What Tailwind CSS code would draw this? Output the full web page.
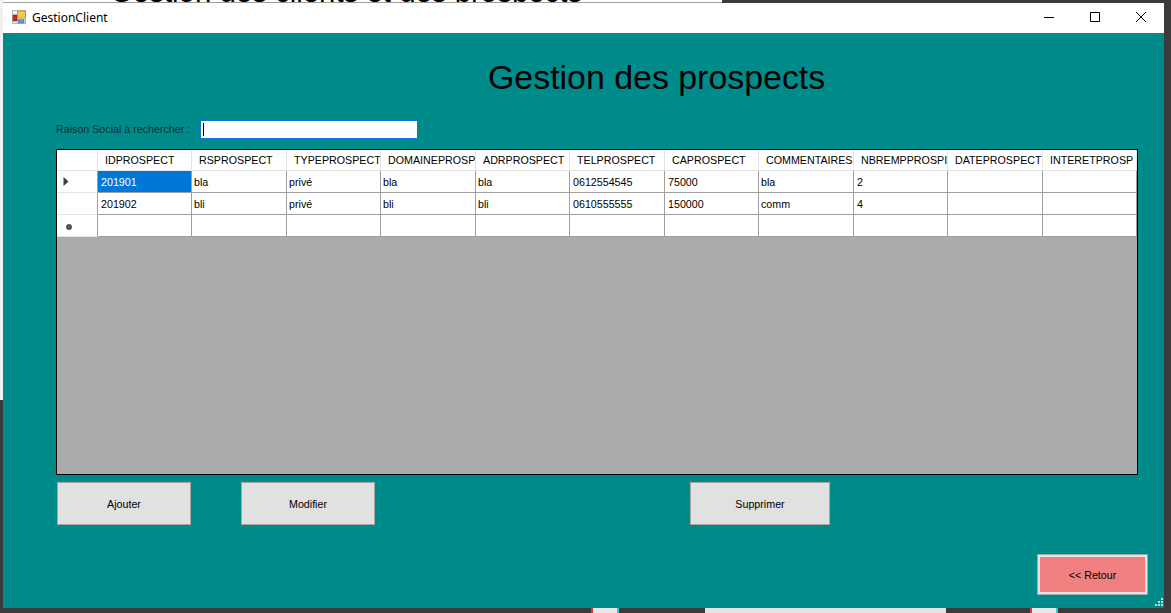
<!DOCTYPE html>
<html><head><meta charset="utf-8"><script src="https://cdn.jsdelivr.net/npm/@tailwindcss/browser@4"></script></head>
<body class="relative w-[1171px] h-[613px] overflow-hidden bg-[#3b3b3b] font-['Liberation_Sans',sans-serif]">
<!-- desktop behind the window -->
<div class="absolute left-0 top-0 w-[722px] h-[3px] bg-white border-b border-[#a0a0a0] overflow-hidden"><div class="absolute left-[110px] top-[-26px] text-[29.4px] leading-[36px] text-black whitespace-nowrap">Gestion des clients et des prospects</div></div>
<div class="absolute left-0 top-0 w-[3px] h-[400px] bg-[#f2f2f2]"></div>
<div class="absolute left-[591px] top-[608px] w-[28px] h-[5px] bg-[#e8e8e8] border-l-2 border-l-[#c84040] border-r-2 border-r-[#40c8c8]"></div>
<div class="absolute left-[705px] top-[608px] w-[241px] h-[5px] bg-[#e4e4e4]"></div>
<div class="absolute left-[1030px] top-[608px] w-[28px] h-[5px] bg-[#e8e8e8] border-l-2 border-l-[#c84040] border-r-2 border-r-[#40c8c8]"></div>

<div class="relative ml-[3px] w-[1161px] pt-[3px]">
  <!-- title bar -->
  <div class="flex items-center h-[30px] bg-white">
    <svg class="ml-[9px] w-[16px] h-[16px]" viewBox="0 0 16 16"><rect x="0.5" y="0.5" width="13" height="13" fill="#f4f4f4" stroke="#b9b9b9"/><rect x="1" y="5" width="4" height="6" fill="#c62828" stroke="#7a1c1c" stroke-width="0.6"/><rect x="5.5" y="1" width="8" height="7" fill="#f7c948" stroke="#b98a1a" stroke-width="0.8"/><rect x="6" y="9.5" width="6" height="3.5" fill="#6a9bd8" stroke="#3f6fb0" stroke-width="0.6"/></svg>
    <span class="ml-[4px] text-[12px] text-black font-['Noto_Sans',sans-serif]">GestionClient</span>
    <div class="ml-auto flex items-center">
      <svg class="w-[46px] h-[30px]" viewBox="0 0 46 30"><path d="M18 14.5H28" stroke="#000" fill="none"/></svg>
      <svg class="w-[46px] h-[30px]" viewBox="0 0 46 30"><path d="M18.5 9.5H27.5V18.5H18.5Z" stroke="#000" fill="none"/></svg>
      <svg class="w-[46px] h-[30px]" viewBox="0 0 46 30"><path d="M18 9L28 19M28 9L18 19" stroke="#000" fill="none" stroke-width="1"/></svg>
    </div>
  </div>
  <!-- client area -->
  <div class="relative h-[575px] bg-[#008b8b] pl-[53px] text-[10.7px] text-black">
    <h1 class="pl-[432px] pt-[25px] h-[87px] text-[33.9px] leading-[38px] font-normal text-black">Gestion des prospects</h1>
    <div class="flex items-center h-[19px]">
      <label class="w-[144px] text-[#10302f]">Raison Social à rechercher :</label>
      <div class="w-[218px] h-[19px] bg-white border border-[#0a78e0] flex items-center pl-[2px]"><div class="w-px h-[13px] bg-black"></div></div>
    </div>
    <!-- data grid -->
    <div class="mt-[10px] w-[1082px] h-[326px] border border-black bg-[#ababab]">
      <div class="grid grid-cols-[41px_94px_95px_94px_95px_94px_95px_94px_95px_94px_95px_94px] grid-rows-[21px_22px_22px_22px] bg-white leading-[21px] whitespace-nowrap">
        <div class="border-r border-b border-[#e4e4e4]"></div>
        <div class="pl-[7px] overflow-hidden border-r border-b border-[#e4e4e4]">IDPROSPECT</div>
        <div class="pl-[7px] overflow-hidden border-r border-b border-[#e4e4e4]">RSPROSPECT</div>
        <div class="pl-[7px] overflow-hidden border-r border-b border-[#e4e4e4]">TYPEPROSPECT</div>
        <div class="pl-[7px] overflow-hidden border-r border-b border-[#e4e4e4]">DOMAINEPROSP</div>
        <div class="pl-[7px] overflow-hidden border-r border-b border-[#e4e4e4]">ADRPROSPECT</div>
        <div class="pl-[7px] overflow-hidden border-r border-b border-[#e4e4e4]">TELPROSPECT</div>
        <div class="pl-[7px] overflow-hidden border-r border-b border-[#e4e4e4]">CAPROSPECT</div>
        <div class="pl-[7px] overflow-hidden border-r border-b border-[#e4e4e4]">COMMENTAIRES</div>
        <div class="pl-[7px] overflow-hidden border-r border-b border-[#e4e4e4]">NBREMPPROSPI</div>
        <div class="pl-[7px] overflow-hidden border-r border-b border-[#e4e4e4]">DATEPROSPECT</div>
        <div class="pl-[7px] overflow-hidden border-r border-b border-[#e4e4e4]">INTERETPROSP</div>

        <div class="flex items-center pl-[6px] border-r border-r-[#a0a0a0] border-b border-b-[#e4e4e4]"><svg class="w-[6px] h-[9px]" viewBox="0 0 6 9"><path d="M0.5 0V9L5.5 4.5Z" fill="#3c3c3c"/></svg></div>
        <div class="pl-[3px] pt-px bg-[#0078d7] text-white border-r border-b border-[#a0a0a0]">201901</div>
        <div class="pl-[2px] pt-px border-r border-b border-[#a0a0a0]">bla</div>
        <div class="pl-[2px] pt-px border-r border-b border-[#a0a0a0]">privé</div>
        <div class="pl-[2px] pt-px border-r border-b border-[#a0a0a0]">bla</div>
        <div class="pl-[2px] pt-px border-r border-b border-[#a0a0a0]">bla</div>
        <div class="pl-[3px] pt-px border-r border-b border-[#a0a0a0]">0612554545</div>
        <div class="pl-[3px] pt-px border-r border-b border-[#a0a0a0]">75000</div>
        <div class="pl-[2px] pt-px border-r border-b border-[#a0a0a0]">bla</div>
        <div class="pl-[3px] pt-px border-r border-b border-[#a0a0a0]">2</div>
        <div class="border-r border-b border-[#a0a0a0]"></div>
        <div class="border-r border-b border-[#a0a0a0]"></div>

        <div class="border-r border-r-[#a0a0a0] border-b border-b-[#e4e4e4]"></div>
        <div class="pl-[3px] pt-px border-r border-b border-[#a0a0a0]">201902</div>
        <div class="pl-[2px] pt-px border-r border-b border-[#a0a0a0]">bli</div>
        <div class="pl-[2px] pt-px border-r border-b border-[#a0a0a0]">privé</div>
        <div class="pl-[2px] pt-px border-r border-b border-[#a0a0a0]">bli</div>
        <div class="pl-[2px] pt-px border-r border-b border-[#a0a0a0]">bli</div>
        <div class="pl-[3px] pt-px border-r border-b border-[#a0a0a0]">0610555555</div>
        <div class="pl-[3px] pt-px border-r border-b border-[#a0a0a0]">150000</div>
        <div class="pl-[2px] pt-px border-r border-b border-[#a0a0a0]">comm</div>
        <div class="pl-[3px] pt-px border-r border-b border-[#a0a0a0]">4</div>
        <div class="border-r border-b border-[#a0a0a0]"></div>
        <div class="border-r border-b border-[#a0a0a0]"></div>

        <div class="flex items-center pl-[9px] pt-[3px] border-r border-r-[#a0a0a0] border-b border-b-[#e4e4e4]"><div class="w-[6px] h-[6px] rounded-full bg-[#555555]"></div></div>
        <div class="border-r border-b border-[#a0a0a0]"></div>
        <div class="border-r border-b border-[#a0a0a0]"></div>
        <div class="border-r border-b border-[#a0a0a0]"></div>
        <div class="border-r border-b border-[#a0a0a0]"></div>
        <div class="border-r border-b border-[#a0a0a0]"></div>
        <div class="border-r border-b border-[#a0a0a0]"></div>
        <div class="border-r border-b border-[#a0a0a0]"></div>
        <div class="border-r border-b border-[#a0a0a0]"></div>
        <div class="border-r border-b border-[#a0a0a0]"></div>
        <div class="border-r border-b border-[#a0a0a0]"></div>
        <div class="border-r border-b border-[#a0a0a0]"></div>
      </div>
    </div>
    <!-- buttons -->
    <div class="flex mt-[7px] ml-[1px]">
      <button class="w-[134px] h-[43px] pt-px bg-[#e1e1e1] border border-[#a6a6a6]">Ajouter</button>
      <button class="ml-[50px] w-[134px] h-[43px] pt-px bg-[#e1e1e1] border border-[#a6a6a6]">Modifier</button>
      <button class="ml-[315px] w-[140px] h-[43px] pt-px bg-[#e1e1e1] border border-[#a6a6a6]">Supprimer</button>
    </div>
    <div class="flex justify-end mt-[29px] pr-[16px]">
      <button class="w-[111px] h-[41px] pt-px bg-[#f08080] border-[3px] border-[#e4e4e4] outline outline-1 outline-[#a6a6a6] -outline-offset-1">&lt;&lt; Retour</button>
    </div>
    <!-- resize grip -->
    <svg class="absolute right-[1px] bottom-[1px] w-[9px] h-[9px]" viewBox="0 0 9 9"><path d="M7 0H9V2H7ZM4 3H6V5H4ZM7 3H9V5H7ZM1 6H3V8H1ZM4 6H6V8H4ZM7 6H9V8H7Z" fill="#c8d8d8"/></svg>
  </div>
</div>
</body></html>
